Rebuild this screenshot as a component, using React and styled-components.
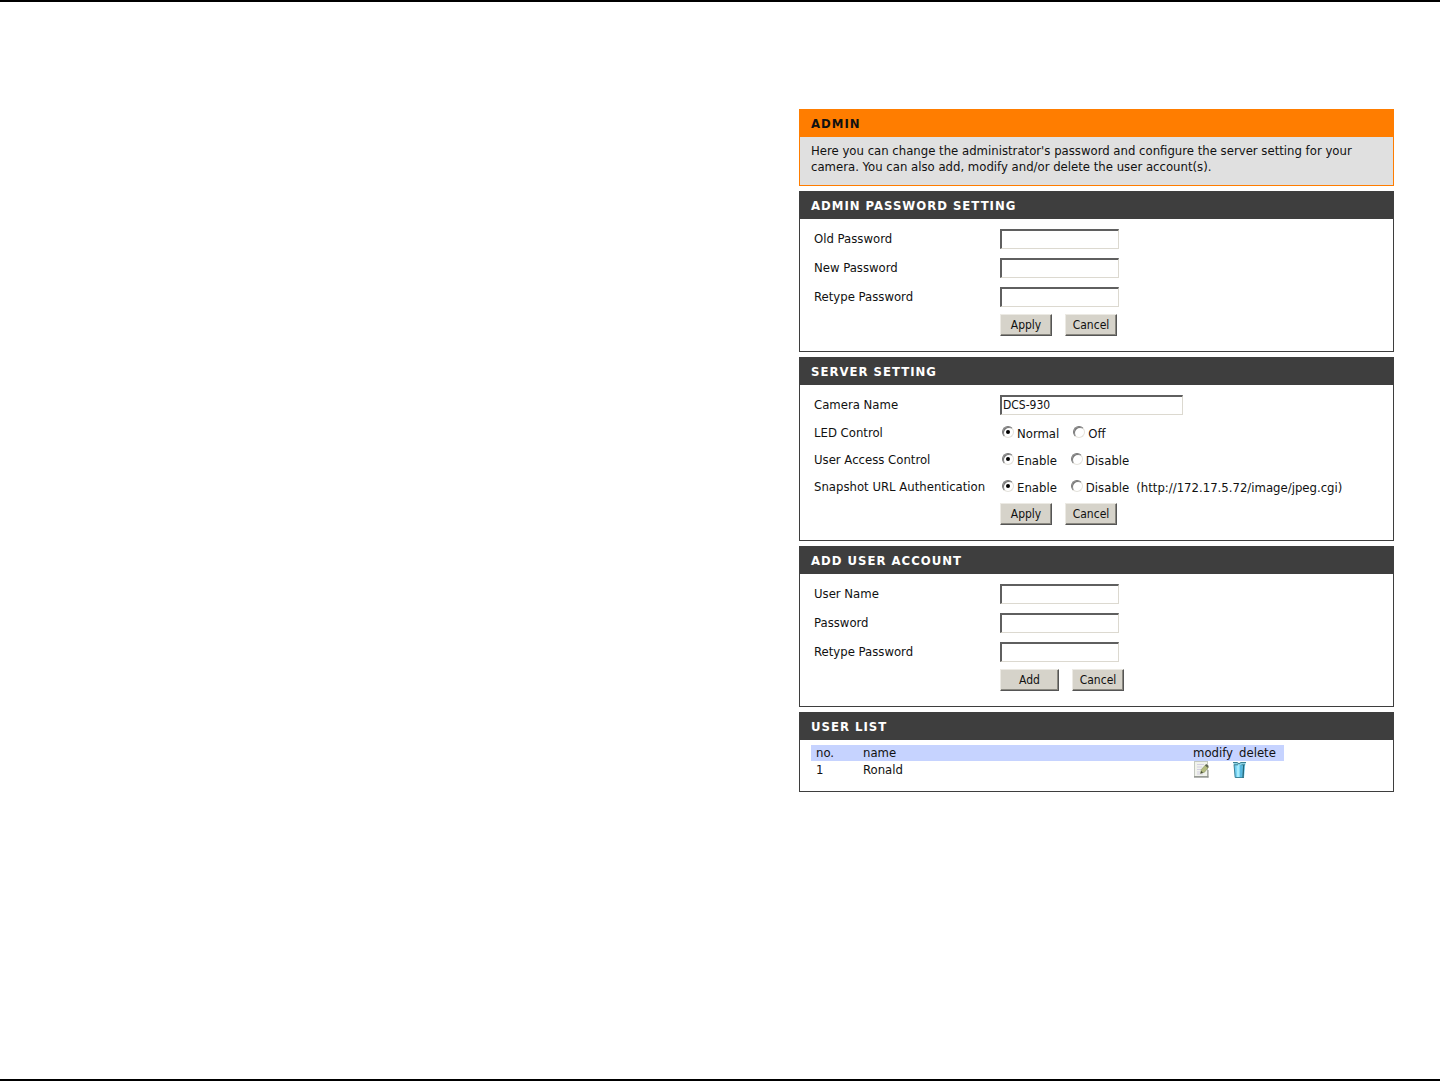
import React from 'react';
import styled, { createGlobalStyle, ThemeProvider } from 'styled-components';

const theme = {
  colors: {
    primary: '#ff7d00',
    dark: '#3e3e3e',
    intro: '#e0e0e0',
    face: '#d6d3ca',
    listHead: '#c6d3ff',
  },
  font: '"DejaVu Sans Condensed", "DejaVu Sans", sans-serif',
};

const GlobalStyle = createGlobalStyle`
  * {
    box-sizing: border-box;
  }

  body {
    background: white;
    color: #111;
    font-family: ${({ theme: { font } }) => font};
    font-size: 13px;
    line-height: 16px;
    margin: 0;
  }
`;

const Page = styled.div`
  border-bottom: 2px solid black;
  border-top: 2px solid black;
  display: flex;
  justify-content: flex-end;
  min-height: 100vh;
  padding: 107px 46px 24px;
`;

const Column = styled.main`
  display: flex;
  flex: 0 1 595px;
  flex-direction: column;
  gap: 5px;
`;

const StyledPanel = styled.section`
  background: ${({ theme: { colors }, $intro }) => ($intro ? colors.intro : 'white')};
  border: 1px solid ${({ theme: { colors }, $intro }) => ($intro ? colors.primary : colors.dark)};
`;

const Title = styled.h2`
  background: ${({ theme: { colors }, $intro }) => ($intro ? colors.primary : colors.dark)};
  color: ${({ $intro }) => ($intro ? '#111' : 'white')};
  font-size: 13px;
  font-weight: 700;
  letter-spacing: 1px;
  line-height: 27px;
  margin: 0;
  padding: 0 11px;
`;

const Intro = styled.p`
  margin: 0;
  padding: 6px 11px 10px;
`;

const Form = styled.form`
  padding: 5px 14px 13px;
`;

const Row = styled.div`
  align-items: center;
  display: grid;
  grid-template-columns: 186px 1fr;
  min-height: ${({ $tall }) => ($tall ? '29px' : '27px')};
`;

const TextInput = styled.input`
  background: white;
  border: solid;
  border-color: #5f5f5f #dcd9d0 #dcd9d0 #5f5f5f;
  border-radius: 0;
  border-width: 2px 1px 1px 2px;
  color: #111;
  font-family: inherit;
  font-size: 12px;
  height: 20px;
  padding: 0 1px;
  width: ${({ $wide }) => ($wide ? '183px' : '119px')};
`;

const Options = styled.div`
  display: flex;
  gap: 12px;
`;

const Option = styled.label`
  display: flex;
  gap: 3px;

  > span {
    padding-top: 3px;
  }
`;

const Radio = styled.input`
  appearance: none;
  background: white;
  border: 1px solid;
  border-color: #777 #e4e2dc #e4e2dc #777;
  border-radius: 50%;
  box-shadow: inset 1px 1px #777;
  display: grid;
  height: 12px;
  margin: 3px 0 0 2px;
  place-items: center;
  width: 12px;

  &:checked::before {
    background: black;
    border-radius: 50%;
    content: '';
    height: 4px;
    width: 4px;
  }
`;

const Note = styled.span`
  margin-left: -5px;
  padding-top: 3px;
`;

const Buttons = styled.div`
  display: flex;
  gap: 13px;
  grid-column: 2;
`;

const Button = styled.button`
  background: ${({ theme: { colors } }) => colors.face};
  border: 1px solid;
  border-color: #eceae4 #555 #555 #eceae4;
  box-shadow: inset -1px -1px #8a8880;
  color: #111;
  font-family: inherit;
  font-size: 12px;
  height: 22px;
  padding: 0;
  width: ${({ $wide }) => ($wide ? '59px' : '52px')};
`;

const UserTable = styled.table`
  border-collapse: collapse;
  margin: 5px 11px 12px;
  table-layout: fixed;
  width: 473px;

  th,
  td {
    font-weight: 400;
    padding: 0 0 0 5px;
    text-align: left;
  }

  th {
    background: ${({ theme: { colors } }) => colors.listHead};
    height: 16px;
  }

  td {
    height: 18px;
  }

  th:nth-child(3),
  td:nth-child(n + 3) {
    padding: 0;
  }

  th:last-child {
    padding-left: 7px;
  }
`;

const IconButton = styled.button`
  background: none;
  border: 0;
  display: block;
  height: 18px;
  padding: 0;
  width: 16px;

  svg {
    display: block;
  }
`;

const ModifyIcon = () => (
  <svg width="16" height="18" viewBox="0 0 16 18" aria-hidden="true">
    <rect x="1.5" y="0.5" width="13" height="15" fill="#f1f3ec" stroke="#c3c8bf" />
    <path d="M1 16h14.5" stroke="#696d66" />
    <path d="M15 9v7.5" stroke="#8b8f88" />
    <path d="M4 3.5h7M4 6h5M4 8.5h4M4 11h3M4 13h6" stroke="#d3cfe2" />
    <path d="M7.5 12.5l0.8-4 4.2-4.5 3 2.2-4 5z" fill="#b4bc80" stroke="#8b9268" strokeWidth="0.6" />
    <path d="M7.5 12.5l0.6-2.6 2 1.6z" fill="#444a38" />
    <path d="M12 4.5l1.2-1.5 2.6 2-1.2 1.7z" fill="#5d6350" />
  </svg>
);

const DeleteIcon = () => (
  <svg width="16" height="18" viewBox="0 0 16 18" aria-hidden="true">
    <path d="M2 3.5l1 13h9l1.2-13z" fill="#6fcdf0" />
    <path d="M4.5 4l0.5 12.5h2.4V4z" fill="#a5ebfc" />
    <path d="M2 3.5l1.2 13h8.8" fill="none" stroke="#3d8296" />
    <path d="M9 4v12.5" stroke="#3fa3cf" />
    <path d="M11.6 4l-0.6 12.5" stroke="#25687a" strokeWidth="1.4" />
    <path d="M1 1h4l2 1.4L9 1h5l-0.8 3H2z" fill="#8bd3e4" />
    <path d="M1 1.5h4l2 1.2 2-1.2h5M2 3.8h4M9.5 3.8H13" fill="none" stroke="#327687" strokeWidth="0.9" />
  </svg>
);

const Panel = ({ title, intro, children }) => (
  <StyledPanel $intro={ intro }>
    <Title $intro={ intro } as={ intro ? 'h1' : 'h2' }>{ title }</Title>
    { children }
  </StyledPanel>
);

const TextRow = ({ id, label, type = 'text', wide, value }) => (
  <Row $tall>
    <label htmlFor={ id }>{ label }</label>
    <TextInput id={ id } type={ type } $wide={ wide } defaultValue={ value } />
  </Row>
);

const RadioRow = ({ name, label, options, note }) => (
  <Row role="radiogroup" aria-labelledby={ `${name}-label` }>
    <span id={ `${name}-label` }>{ label }</span>
    <Options>
      { options.map((option, index) => (
        <Option key={ option }>
          <Radio type="radio" name={ name } value={ option } defaultChecked={ index === 0 } />
          <span>{ option }</span>
        </Option>
      )) }
      { note && <Note>{ note }</Note> }
    </Options>
  </Row>
);

const ButtonRow = ({ submit = 'Apply', wide }) => (
  <Row>
    <Buttons>
      <Button type="button" $wide={ wide }>{ submit }</Button>
      <Button type="reset">Cancel</Button>
    </Buttons>
  </Row>
);

const users = [{ id: 1, name: 'Ronald' }];

const App = () => (
  <ThemeProvider theme={ theme }>
    <GlobalStyle />
    <Page>
      <Column>
        <Panel title="ADMIN" intro>
          <Intro>
            Here you can change the administrator&apos;s password and configure the server
            setting for your camera. You can also add, modify and/or delete the user
            account(s).
          </Intro>
        </Panel>

        <Panel title="ADMIN PASSWORD SETTING">
          <Form>
            <TextRow id="old-password" label="Old Password" type="password" />
            <TextRow id="new-password" label="New Password" type="password" />
            <TextRow id="retype-password" label="Retype Password" type="password" />
            <ButtonRow />
          </Form>
        </Panel>

        <Panel title="SERVER SETTING">
          <Form>
            <TextRow id="camera-name" label="Camera Name" value="DCS-930" wide />
            <RadioRow name="led" label="LED Control" options={ ['Normal', 'Off'] } />
            <RadioRow
              name="access"
              label="User Access Control"
              options={ ['Enable', 'Disable'] }
            />
            <RadioRow
              name="snapshot"
              label="Snapshot URL Authentication"
              options={ ['Enable', 'Disable'] }
              note="(http://172.17.5.72/image/jpeg.cgi)"
            />
            <ButtonRow />
          </Form>
        </Panel>

        <Panel title="ADD USER ACCOUNT">
          <Form>
            <TextRow id="user-name" label="User Name" />
            <TextRow id="user-password" label="Password" type="password" />
            <TextRow id="user-retype" label="Retype Password" type="password" />
            <ButtonRow submit="Add" wide />
          </Form>
        </Panel>

        <Panel title="USER LIST">
          <UserTable>
            <colgroup>
              <col width="47" />
              <col />
              <col width="39" />
              <col width="52" />
            </colgroup>
            <thead>
              <tr>
                <th>no.</th>
                <th>name</th>
                <th>modify</th>
                <th>delete</th>
              </tr>
            </thead>
            <tbody>
              { users.map(({ id, name }) => (
                <tr key={ id }>
                  <td>{ id }</td>
                  <td>{ name }</td>
                  <td>
                    <IconButton type="button" aria-label={ `modify ${name}` }>
                      <ModifyIcon />
                    </IconButton>
                  </td>
                  <td>
                    <IconButton type="button" aria-label={ `delete ${name}` }>
                      <DeleteIcon />
                    </IconButton>
                  </td>
                </tr>
              )) }
            </tbody>
          </UserTable>
        </Panel>
      </Column>
    </Page>
  </ThemeProvider>
);

export default App;
